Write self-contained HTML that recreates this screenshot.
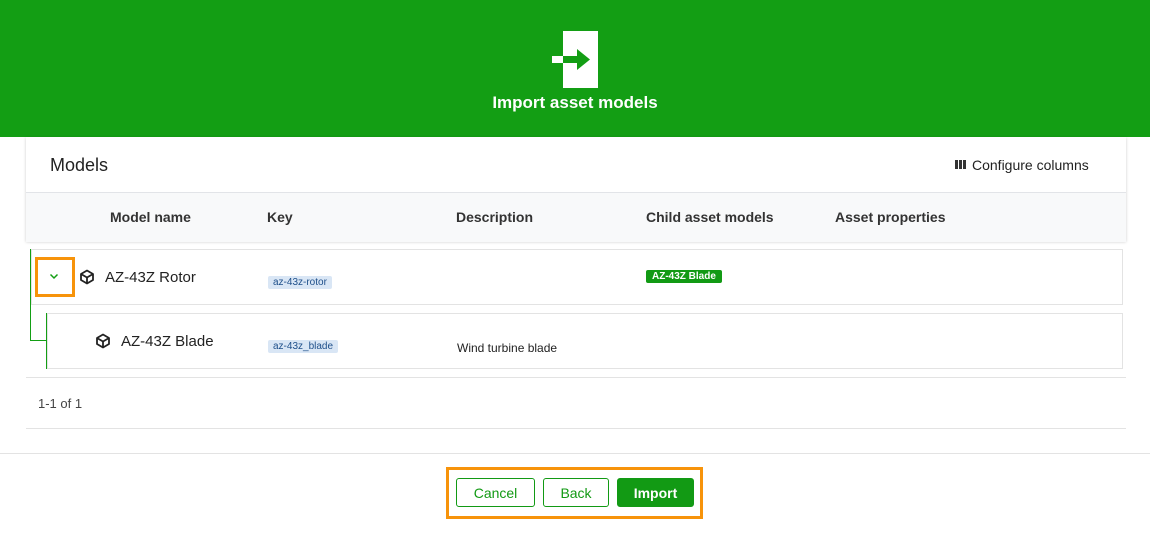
<!DOCTYPE html><html><head><style>
body{margin:0;width:1150px;height:533px;background:#fff;font-family:"Liberation Sans",sans-serif;position:relative;overflow:hidden;color:#222}
.a{position:absolute}
.hdr{left:0;top:0;width:1150px;height:137px;background:#139e14}
.card{left:26px;top:137px;width:1100px;height:104px;background:#fff;box-shadow:0 1px 3px rgba(0,0,0,.2)}
.th{left:26px;top:192px;width:1100px;height:49px;background:#f8f9fa;border-top:1px solid #e2e4e8}
.th span{position:absolute;top:16px;font-size:14px;font-weight:bold;color:#333}
.row{border:1px solid #e3e3e3;background:#fff}
.tag{font-size:10px;color:#1e4f8a;background:#d9e6f5;padding:1px 5px;border-radius:2px}
.btn{top:478px;height:29px;border:1px solid #129a14;border-radius:3px;color:#129a14;font-size:14px;line-height:29px;text-align:center;box-sizing:border-box}
</style></head><body>
<div class="a hdr"></div>
<svg class="a" style="left:550px;top:30px" width="50" height="60"><rect x="13" y="1" width="35" height="57" fill="#fff"/><rect x="2" y="26" width="12" height="7" fill="#fff"/><rect x="13" y="26" width="16" height="7" fill="#139e14"/><polygon points="27,19 40,29.5 27,40" fill="#139e14"/></svg>
<div class="a" style="left:0;width:1150px;top:93px;text-align:center;color:#fff;font-size:17px;font-weight:bold">Import asset models</div>
<div class="a card"></div>
<div class="a" style="left:50px;top:155px;font-size:18px">Models</div>
<svg class="a" style="left:955px;top:160px" width="12" height="10"><rect x="0" y="0" width="3" height="9" fill="#333"/><rect x="4" y="0" width="3" height="9" fill="#333"/><rect x="8" y="0" width="3" height="9" fill="#333"/></svg>
<div class="a" style="left:972px;top:157px;font-size:14px">Configure columns</div>
<div class="a th"><span style="left:84px">Model name</span><span style="left:241px">Key</span><span style="left:430px">Description</span><span style="left:620px">Child asset models</span><span style="left:809px">Asset properties</span></div>
<div class="a" style="left:30px;top:249px;width:1px;height:92px;background:#139e14"></div>
<div class="a" style="left:30px;top:340px;width:16px;height:1px;background:#139e14"></div>
<div class="a" style="left:46px;top:313px;width:1px;height:56px;background:#139e14"></div>
<div class="a row" style="left:31px;top:249px;width:1090px;height:54px"></div>
<div class="a row" style="left:47px;top:313px;width:1074px;height:54px"></div>
<div class="a" style="left:35px;top:257px;width:34px;height:34px;border:3px solid #f7930a"></div>
<svg class="a" style="left:49px;top:273px" width="10" height="7"><path d="M1.5 1.5L5 5L8.5 1.5" stroke="#139e14" stroke-width="1.5" fill="none"/></svg>
<svg class="a" style="left:79px;top:269px" width="16" height="16" viewBox="0 0 16 16"><path d="M8 1.5L14 5v6L8 14.5 2 11V5z M2 5l6 3.5L14 5 M8 8.5V14.5" stroke="#222" stroke-width="1.8" fill="none" stroke-linejoin="round"/></svg>
<div class="a" style="left:105px;top:269px;font-size:15px">AZ-43Z Rotor</div>
<div class="a" style="left:268px;top:272px"><span class="tag">az-43z-rotor</span></div>
<div class="a" style="left:646px;top:270px;background:#129a14;color:#fff;font-size:10px;font-weight:bold;padding:1px 6px;border-radius:2px">AZ-43Z Blade</div>
<svg class="a" style="left:95px;top:333px" width="16" height="16" viewBox="0 0 16 16"><path d="M8 1.5L14 5v6L8 14.5 2 11V5z M2 5l6 3.5L14 5 M8 8.5V14.5" stroke="#222" stroke-width="1.8" fill="none" stroke-linejoin="round"/></svg>
<div class="a" style="left:121px;top:333px;font-size:15px">AZ-43Z Blade</div>
<div class="a" style="left:268px;top:336px"><span class="tag">az-43z_blade</span></div>
<div class="a" style="left:457px;top:341px;font-size:12px">Wind turbine blade</div>
<div class="a" style="left:26px;top:377px;width:1100px;height:1px;background:#e3e3e3"></div>
<div class="a" style="left:38px;top:396px;font-size:13px;color:#444">1-1 of 1</div>
<div class="a" style="left:26px;top:428px;width:1100px;height:1px;background:#e3e3e3"></div>
<div class="a" style="left:0;top:453px;width:1150px;height:1px;background:#e3e3e3"></div>
<div class="a" style="left:446px;top:467px;width:251px;height:46px;border:3px solid #f7930a"></div>
<div class="a btn" style="left:456px;width:79px">Cancel</div>
<div class="a btn" style="left:543px;width:66px">Back</div>
<div class="a btn" style="left:617px;width:77px;background:#129a14;color:#fff;font-weight:bold">Import</div>
</body></html>
